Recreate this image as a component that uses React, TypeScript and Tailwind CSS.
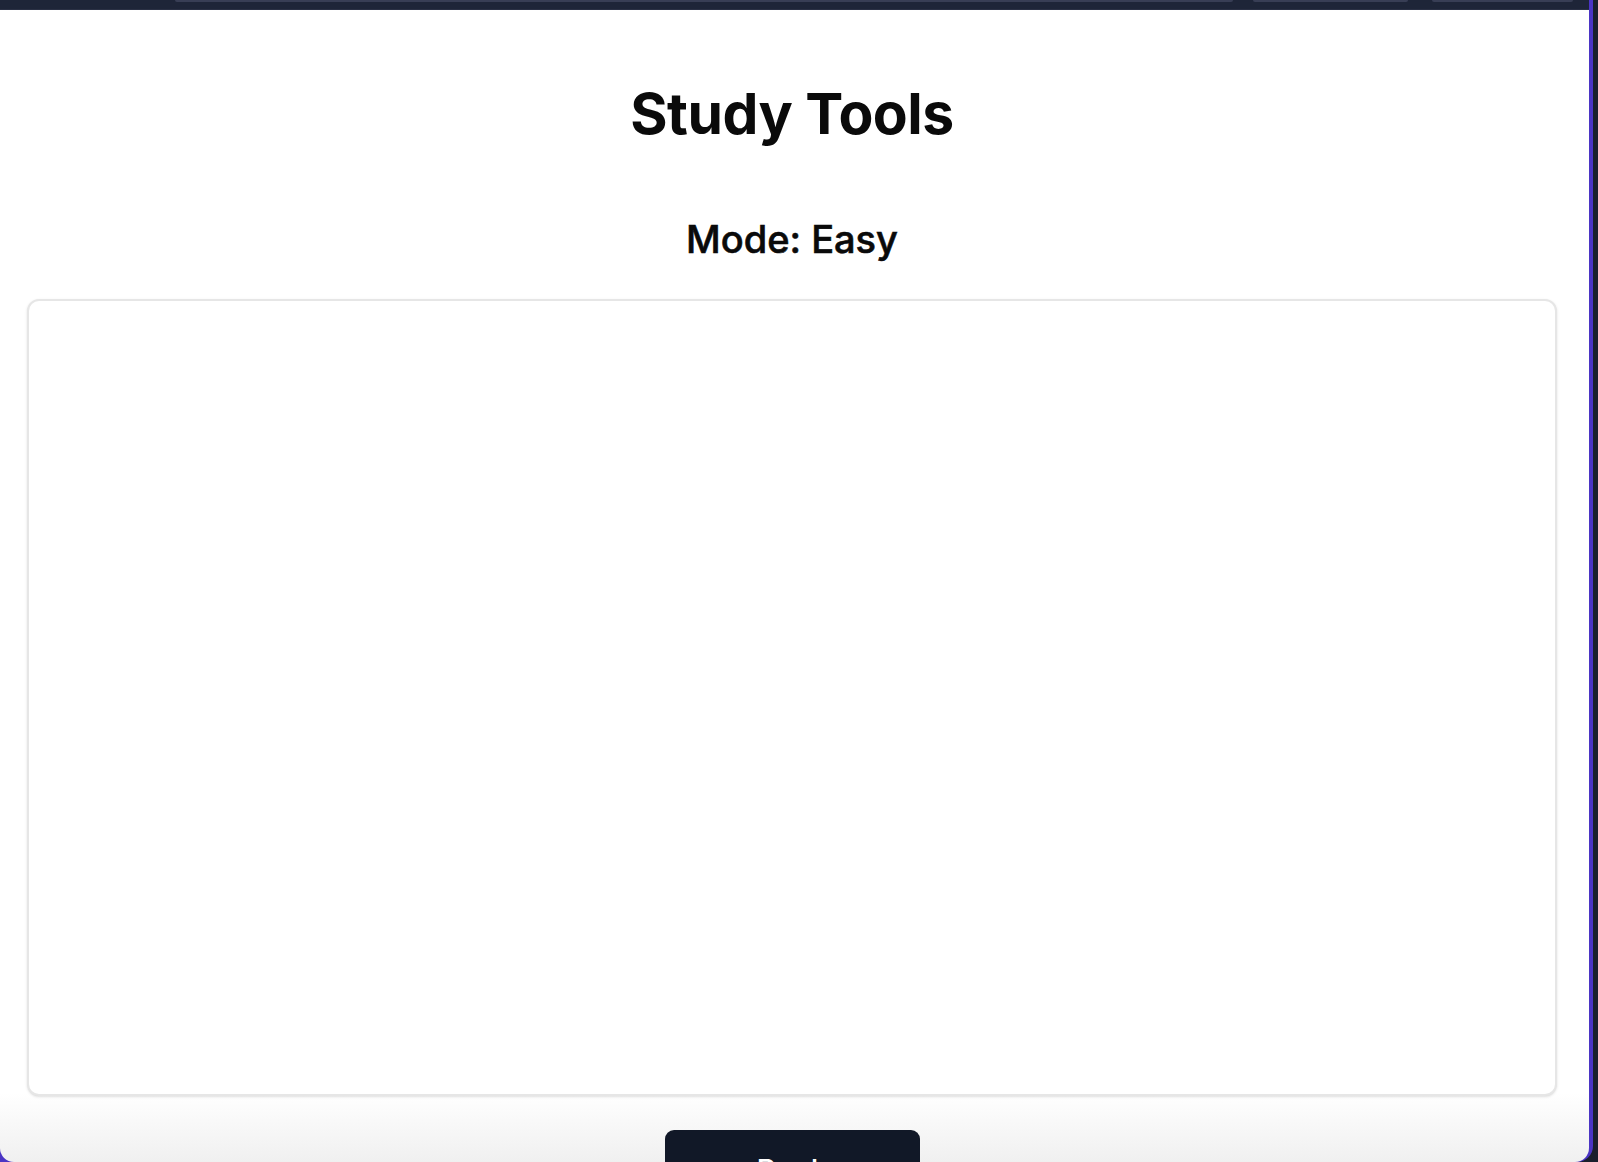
import React from 'react'

const tabEdges = [
  { left: 175, width: 1058 },
  { left: 1253, width: 155 },
  { left: 1432, width: 141 },
]

export default function App() {
  return (
    <div
      className="flex h-[1162px] w-[1598px] overflow-hidden bg-[#1a1f2d]"
      style={{ fontFamily: 'Inter, "Noto Sans", sans-serif' }}
    >
      <div className="flex h-full w-[1593px] flex-col rounded-br-[16px] bg-[#4b35c4] pr-[4px]">
        {/* window chrome strip */}
        <div className="relative h-[10px] w-full shrink-0 border-b border-[#2a3044] bg-[#1e2538]">
          {tabEdges.map((t) => (
            <div
              key={t.left}
              className="absolute top-0 h-[2px] rounded-b-sm bg-[#383e55]"
              style={{ left: t.left, width: t.width }}
            />
          ))}
        </div>

        <div className="flex flex-1 flex-col overflow-hidden rounded-b-[14px] bg-linear-to-b from-white from-[94%] to-[#f0f0f0]">
          <div className="flex w-[1584px] flex-col items-center pl-[27px] pr-[27px]">
            <h1 className="mt-[70px] text-[57px] font-bold leading-[68px] tracking-[-0.5px] text-[#0a0a0a]">
              Study Tools
            </h1>
            <h2 className="mt-[69px] text-[38px] font-medium leading-[44px] text-[#0a0a0a] [-webkit-text-stroke:0.6px_#0a0a0a]">
              Mode: Easy
            </h2>
            <div className="mt-[38px] h-[797px] w-full rounded-[12px] border-2 border-[#e6e6e6] bg-white shadow-sm" />
            <button className="mt-[34px] flex h-[64px] w-[255px] items-start justify-center rounded-[9px] bg-[#111827] pt-[18px] text-[30px] font-medium text-white">
              Back
            </button>
          </div>
        </div>
      </div>
    </div>
  )
}
